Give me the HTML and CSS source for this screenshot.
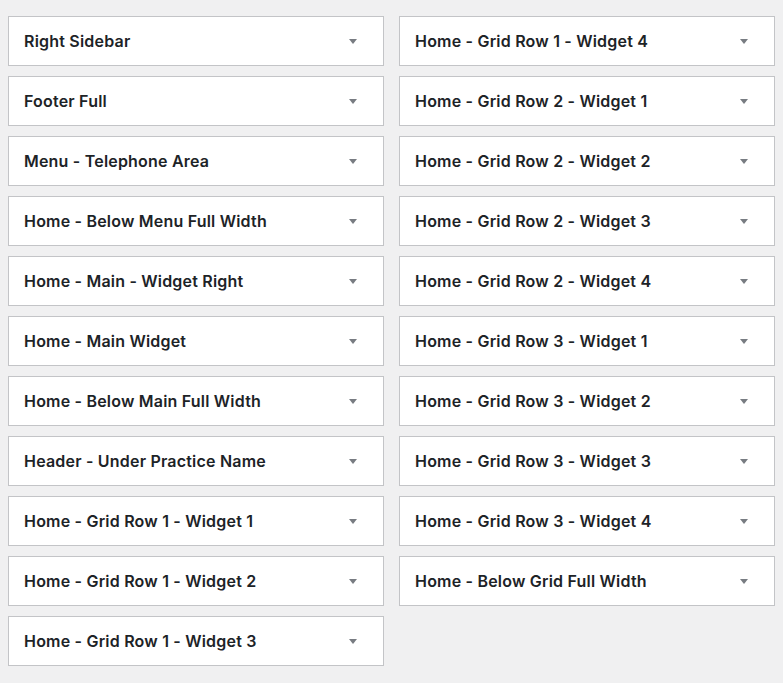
FILE: index.html
```html
<!DOCTYPE html>
<html>
<head>
<meta charset="utf-8">
<link rel="stylesheet" href="styles.css">
</head>
<body>
<div class="areas">
  <div class="col">
    <div class="area"><h3 class="title">Right Sidebar</h3><span class="arrow"></span></div>
    <div class="area"><h3 class="title">Footer Full</h3><span class="arrow"></span></div>
    <div class="area"><h3 class="title">Menu - Telephone Area</h3><span class="arrow"></span></div>
    <div class="area"><h3 class="title">Home - Below Menu Full Width</h3><span class="arrow"></span></div>
    <div class="area"><h3 class="title">Home - Main - Widget Right</h3><span class="arrow"></span></div>
    <div class="area"><h3 class="title">Home - Main Widget</h3><span class="arrow"></span></div>
    <div class="area"><h3 class="title">Home - Below Main Full Width</h3><span class="arrow"></span></div>
    <div class="area"><h3 class="title">Header - Under Practice Name</h3><span class="arrow"></span></div>
    <div class="area"><h3 class="title">Home - Grid Row 1 - Widget 1</h3><span class="arrow"></span></div>
    <div class="area"><h3 class="title">Home - Grid Row 1 - Widget 2</h3><span class="arrow"></span></div>
    <div class="area"><h3 class="title">Home - Grid Row 1 - Widget 3</h3><span class="arrow"></span></div>
  </div>
  <div class="col">
    <div class="area"><h3 class="title">Home - Grid Row 1 - Widget 4</h3><span class="arrow"></span></div>
    <div class="area"><h3 class="title">Home - Grid Row 2 - Widget 1</h3><span class="arrow"></span></div>
    <div class="area"><h3 class="title">Home - Grid Row 2 - Widget 2</h3><span class="arrow"></span></div>
    <div class="area"><h3 class="title">Home - Grid Row 2 - Widget 3</h3><span class="arrow"></span></div>
    <div class="area"><h3 class="title">Home - Grid Row 2 - Widget 4</h3><span class="arrow"></span></div>
    <div class="area"><h3 class="title">Home - Grid Row 3 - Widget 1</h3><span class="arrow"></span></div>
    <div class="area"><h3 class="title">Home - Grid Row 3 - Widget 2</h3><span class="arrow"></span></div>
    <div class="area"><h3 class="title">Home - Grid Row 3 - Widget 3</h3><span class="arrow"></span></div>
    <div class="area"><h3 class="title">Home - Grid Row 3 - Widget 4</h3><span class="arrow"></span></div>
    <div class="area"><h3 class="title">Home - Below Grid Full Width</h3><span class="arrow"></span></div>
  </div>
</div>
</body>
</html>
```
FILE: styles.css
```css
html, body {
  margin: 0;
  padding: 0;
  background: #f0f0f1;
}
body {
  font-family: Inter, "Noto Sans", "Liberation Sans", sans-serif;
  color: #1d2327;
}
.areas {
  display: grid;
  grid-template-columns: 376px 376px;
  column-gap: 15px;
  padding: 16px 8px 0 8px;
  align-items: start;
}
.col {
  display: flex;
  flex-direction: column;
  gap: 10px;
}
.area {
  box-sizing: border-box;
  height: 50px;
  background: #fff;
  border: 1px solid #c3c4c7;
  display: flex;
  align-items: center;
  justify-content: space-between;
  padding: 0 26px 0 15px;
}
.title {
  margin: 0;
  font-size: 16px;
  font-weight: 600;
  line-height: 20px;
  letter-spacing: 0.2px;
}
.arrow {
  width: 0;
  height: 0;
  border-left: 4px solid transparent;
  border-right: 4px solid transparent;
  border-top: 5px solid #787c82;
  margin-top: 1px;
}
```
